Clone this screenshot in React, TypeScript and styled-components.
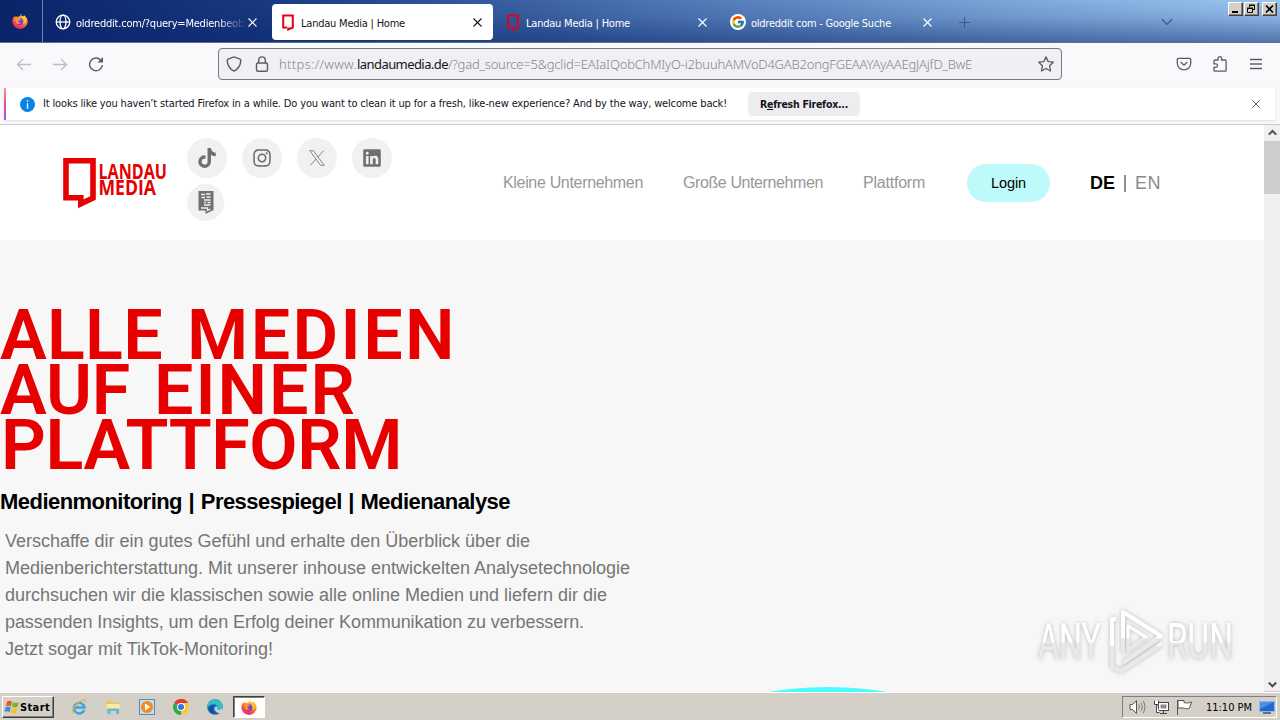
import React, { ReactNode, useLayoutEffect, useRef, useState } from 'react'
import { FaInstagram, FaLinkedin, FaTiktok } from 'react-icons/fa'
import { FcGoogle } from 'react-icons/fc'
import styled, { createGlobalStyle } from 'styled-components'

const uiFont = "'DejaVu Sans Condensed', 'DejaVu Sans', sans-serif"
const pageFont = "'Liberation Sans', Arial, sans-serif"

const GlobalStyle = createGlobalStyle`
  * {
    box-sizing: border-box;
  }
  body {
    margin: 0;
    overflow: hidden;
  }
  svg {
    display: block;
    flex: none;
  }
`

/* ---------- text ---------- */

const TextBox = styled.span`
  display: block;
  flex: none;
  white-space: pre;
`

type FitTextProps = {
  width: number
  children: ReactNode
}

// spreads the tracking so that a line takes exactly the given width
function FitText({ width, children }: FitTextProps) {
  const ref = useRef<HTMLSpanElement>(null)
  const [spacing, setSpacing] = useState(0)

  useLayoutEffect(() => {
    const el = ref.current
    if (!el) return
    const count = el.textContent?.length ?? 1
    setSpacing((width - el.getBoundingClientRect().width) / count)
  }, [width])

  return (
    <TextBox>
      <span ref={ref} style={{ letterSpacing: spacing }}>
        {children}
      </span>
    </TextBox>
  )
}

/* ---------- browser chrome ---------- */

const Screen = styled.div`
  display: flex;
  flex-direction: column;
  width: 1280px;
  height: 720px;
  overflow: hidden;
  background: #f9f9fb;
  font-family: ${uiFont};
`

const TabStrip = styled.div`
  display: flex;
  flex: none;
  height: 43px;
  border-bottom: 1px solid #5d6f95;
  color: #fff;
  font-size: 11px;
  background:
    linear-gradient(to bottom, rgba(10, 36, 106, 0) 0%, rgba(10, 36, 106, 0.12) 40%, rgba(10, 36, 106, 0.5) 100%),
    linear-gradient(to right, #0a246a 0%, #173880 20%, #4a73b2 50%, #7ba6d8 78%, #9bc6f0 100%);
`

const PinnedArea = styled.div`
  display: flex;
  align-items: center;
  justify-content: center;
  width: 43px;
  padding-right: 3px;
  margin-right: 4px;
  border-right: 1px solid #7283ad;
`

const TabItem = styled.div<{ $active?: boolean }>`
  display: flex;
  align-items: center;
  width: 221px;
  height: 36px;
  margin: 4px 4px 0 0;
  padding: 0 11px 0 8px;
  border-radius: 4px;
  color: ${({ $active }) => ($active ? '#15141a' : '#fff')};
  background: ${({ $active }) => ($active ? '#fff' : 'transparent')};
`

const TabIcon = styled.div`
  display: flex;
  justify-content: center;
  width: 16px;
  margin-right: 5px;
`

const TabLabel = styled.div<{ $fade?: boolean }>`
  flex: 1;
  padding-top: 3px;
  overflow: hidden;
  line-height: 16px;
  ${({ $fade }) => $fade && 'mask-image: linear-gradient(to right, #000 82%, transparent 99%);'}
`

const NewTab = styled.div`
  display: flex;
  align-items: center;
  flex: 1;
  padding: 3px 0 0 12px;
`

const TabsMenu = styled.div`
  display: flex;
  align-items: center;
  padding: 2px 55px 0 0;
`

const WindowButtons = styled.div`
  display: flex;
  gap: 1px;
  padding: 2px 3px 0 0;
`

const WindowButton = styled.div<{ $gap?: boolean }>`
  display: flex;
  align-items: center;
  justify-content: center;
  width: 15px;
  height: 14px;
  margin-left: ${({ $gap }) => ($gap ? '2px' : '0')};
  border: 1px solid;
  border-color: #fff #404040 #404040 #fff;
  box-shadow: inset -1px -1px 0 #808080;
  background: #d4d0c8;
`

const NavBar = styled.div`
  display: flex;
  align-items: center;
  flex: none;
  height: 45px;
  padding: 0 16px 3px;
  color: #5b5b66;
`

const HistoryButtons = styled.div`
  display: flex;
  gap: 20px;
  width: 202px;
`

const UrlBar = styled.div`
  display: flex;
  align-items: center;
  width: 844px;
  height: 32px;
  padding: 0 7px;
  border: 1px solid #77777f;
  border-radius: 4px;
  background: #f0f0f4;
`

const UrlText = styled.div`
  display: flex;
  flex: 1;
  margin-left: 9px;
  color: #85858f;
  font-family: 'Noto Sans', 'Open Sans', sans-serif;
  font-size: 13px;
  font-weight: 300;
  line-height: 18px;
`

const UrlDomain = styled.div`
  color: #15141a;
  font-weight: 400;
`

const UrlIcons = styled.div`
  display: flex;
  gap: 12px;
`

const ToolbarIcons = styled.div`
  display: flex;
  gap: 20px;
  margin-left: auto;
`

const InfoBar = styled.div`
  display: flex;
  align-items: center;
  flex: none;
  width: 1271px;
  height: 32px;
  margin: 0 0 4px 4px;
  padding-right: 15px;
  background: #fff;
  box-shadow: 0 1px 2px rgba(58, 57, 68, 0.15);
  color: #15141a;
  font-size: 11px;
`

const InfoAccent = styled.div`
  align-self: stretch;
  width: 2px;
  margin-right: 14px;
  background: linear-gradient(to bottom, #ff9a73, #e3508f 50%, #9059ff);
`

const InfoMessage = styled.div`
  margin-left: 8px;
  padding-bottom: 1px;
`

const RefreshButton = styled.div`
  display: flex;
  align-items: center;
  justify-content: center;
  width: 112px;
  height: 24px;
  margin: 0 auto 0 21px;
  border-radius: 4px;
  background: #ededf0;
  font-size: 10.5px;
  font-weight: 700;
`

/* ---------- web page ---------- */

const Viewport = styled.div`
  display: flex;
  flex: none;
  height: 568px;
  border-top: 1px solid #c8c8cc;
`

const Page = styled.div`
  width: 1264px;
  overflow: hidden;
  font-family: ${pageFont};
`

const PageHeader = styled.header`
  display: flex;
  align-items: center;
  height: 115px;
  padding-left: 63px;
  background: #fff;
`

const SocialList = styled.div`
  display: flex;
  flex-wrap: wrap;
  gap: 6px 15px;
  width: 206px;
  margin: 0 110px 6px 16px;
`

const SocialButton = styled.div<{ $size?: number }>`
  display: flex;
  align-items: center;
  justify-content: center;
  width: ${({ $size = 40 }) => $size}px;
  height: ${({ $size = 40 }) => $size}px;
  border-radius: 50%;
  background: #f1f1f1;
  color: #6f6f6f;
`

const MainNav = styled.nav`
  display: flex;
  align-items: center;
  gap: 40px;
  color: #979797;
  font-size: 16px;
`

const LoginButton = styled.div`
  display: flex;
  align-items: center;
  justify-content: center;
  width: 83px;
  height: 38px;
  margin-left: 2px;
  border-radius: 19px;
  background: #bffafa;
  color: #000;
  font-size: 14.5px;
`

const LanguageSwitch = styled.div`
  display: flex;
  align-items: center;
  gap: 9px;
  padding-top: 1px;
  color: #8a8a8a;
  font-size: 18px;
  b {
    color: #000;
  }
`

const LanguageDivider = styled.div`
  width: 2px;
  height: 17px;
  background: #8f8f8f;
`

const Hero = styled.main`
  position: relative;
  height: 452px;
  padding-top: 68px;
  overflow: hidden;
  background: #f7f7f7;
`

const Headline = styled.h1`
  margin: 0;
  color: #e60000;
  font-family: Roboto, sans-serif;
  font-size: 70px;
  font-weight: 580;
  line-height: 55px;
`

const HeadlineRow = styled.div<{ $indent?: number }>`
  display: flex;
  gap: 24px;
  padding-left: ${({ $indent = 0 }) => $indent}px;
`

const SubHeadline = styled.h2`
  margin: 16px 0 0;
  color: #000;
  font-size: 22px;
  font-weight: 700;
  line-height: 26px;
  word-spacing: 1px;
`

const Intro = styled.div`
  margin: 13px 0 0 5px;
  color: #757575;
  font-size: 18px;
  line-height: 27px;
`

const CyanDisc = styled.div`
  position: absolute;
  top: 447px;
  left: 468px;
  width: 720px;
  height: 720px;
  border-radius: 50%;
  background: #4ffafa;
`

const Watermark = styled.div`
  position: absolute;
  top: 363px;
  left: 1032px;
`

const ScrollBar = styled.div`
  display: flex;
  flex-direction: column;
  width: 16px;
  background: #f0f0f0;
`

const ScrollArrow = styled.div`
  display: flex;
  align-items: center;
  justify-content: center;
  height: 16px;
`

const ScrollThumb = styled.div`
  height: 53px;
  margin-bottom: auto;
  background: #cdcdcd;
`

/* ---------- taskbar ---------- */

const Taskbar = styled.div`
  display: flex;
  align-items: center;
  flex: 1;
  padding: 1px 3px 0 2px;
  border-top: 1px solid #fff;
  box-shadow: 0 -1px 0 #d4d0c8;
  background: #d4d0c8;
  color: #000;
`

const StartButton = styled.div`
  display: flex;
  align-items: center;
  width: 52px;
  height: 22px;
  padding-left: 1px;
  border: 1px solid;
  border-color: #fff #404040 #404040 #fff;
  box-shadow: inset -1px -1px 0 #808080;
  font-size: 11px;
  font-weight: 700;
`

const QuickLaunch = styled.div`
  display: flex;
  align-items: center;
  gap: 18px;
  margin-left: 17px;
`

const RunningApp = styled.div`
  display: flex;
  align-items: center;
  justify-content: center;
  width: 32px;
  height: 22px;
  margin-left: 10px;
  border: 1px solid;
  border-color: #404040 #fff #fff #404040;
  box-shadow: inset 1px 1px 0 #808080;
  background: #fff;
`

const Tray = styled.div`
  display: flex;
  align-items: center;
  gap: 7px;
  width: 155px;
  height: 22px;
  margin-left: auto;
  padding-left: 6px;
  border: 1px solid;
  border-color: #808080 #fff #fff #808080;
  font-size: 11px;
`

const Clock = styled.div`
  margin-left: 7px;
`

/* ---------- drawings ---------- */

type IconProps = {
  size?: number
  color?: string
}

const FirefoxIcon = ({ size = 16 }: IconProps) => (
  <svg width={size} height={size} viewBox="0 0 16 16">
    <defs>
      <linearGradient id="fx-flame" x1="0.8" y1="0" x2="0.3" y2="1">
        <stop offset="0" stopColor="#fff04a" />
        <stop offset="0.4" stopColor="#ff9a22" />
        <stop offset="0.75" stopColor="#ff4240" />
        <stop offset="1" stopColor="#e62380" />
      </linearGradient>
    </defs>
    <path
      d="M10 .3c-.9 1-.9 2.1-.4 3 .6-.3 1.500-.2 2 .2.400-.5.300-1 .200-1.500 2 1.300 3.900 3.800 3.900 6.500A7.600 7.500 0 0 1 8 15.900 7.600 7.500 0 0 1 .4 8.500C.4 6 1.400 4 2.500 2.900l.4 1.400L4.500 3l.5 1.500c1-1.300 2.400-1.100 3.300-1.200C8.100 2 8.900.8 10 .3z"
      fill="url(#fx-flame)"
    />
    <circle cx="8" cy="8.800" r="3.500" fill="#7542e5" />
    <path d="M3.500 5.500c1.300-.7 2.500-.5 3.500.1 1.300 0 1.900.6 1.700 1-.5.800-1.700.5-2.200 1.500-.3 1.300.9 2.200 2.200 1.900-1.200 1.700-3.900 1.300-4.700-.6-.5-1.300-.7-2.700-.5-3.900z" fill="#ff9422" />
    <path d="M10 5c1.900 1.600 2.300 4.200.8 6 2.200-.2 3.400-2.200 2.900-4.300C13.200 5 11.800 3.400 10 3z" fill="#ffc533" />
  </svg>
)

const GlobeIcon = () => (
  <svg width="16" height="16" viewBox="0 0 16 16" fill="none" stroke="#fff" strokeWidth="1.300">
    <circle cx="8" cy="8" r="6.800" />
    <ellipse cx="8" cy="8" rx="3" ry="6.800" />
    <path d="M1.200 8h13.600" />
  </svg>
)

const FrameIcon = () => (
  <svg width="12" height="17" viewBox="0 0 12 17" fill="none" stroke="#e2001a" strokeWidth="2">
    <path d="M5 13.500H1.200v-12h9.600v12L6.200 15.500v-2" />
  </svg>
)

const CloseIcon = ({ size = 9, color = 'currentColor' }: IconProps) => (
  <svg width={size} height={size} viewBox="0 0 9 9" stroke={color} strokeWidth="1.100">
    <path d="M.5.5l8 8M8.500.5l-8 8" />
  </svg>
)

const ArrowIcon = ({ back }: { back?: boolean }) => (
  <svg width="16" height="16" viewBox="0 0 16 16" fill="none" stroke="#bdbdc3" strokeWidth="1.300">
    <path d={back ? 'M15 8.500H1.500M7 3L1.500 8.500 7 14' : 'M1 8.500h13.500M9 3L14.500 8.500 9 14'} />
  </svg>
)

const ReloadIcon = () => (
  <svg width="16" height="16" viewBox="0 0 16 16" fill="none" stroke="#5b5b66" strokeWidth="1.400">
    <path d="M12.700 4A6.400 6.400 0 1 0 14.400 9" />
    <path d="M15 1v5.500H9.500z" fill="#5b5b66" stroke="none" />
  </svg>
)

const ShieldIcon = () => (
  <svg width="16" height="16" viewBox="0 0 16 16" fill="none" stroke="#5b5b66" strokeWidth="1.400">
    <path d="M8 .9l6 2.300c.7.3.8.700.8 1.200-.2 5-2.500 8.700-6.800 10.700C3.700 13.100 1.400 9.400 1.200 4.400c0-.5.100-.9.800-1.200z" />
  </svg>
)

const LockIcon = () => (
  <svg width="16" height="16" viewBox="0 0 16 16" fill="none" stroke="#5b5b66" strokeWidth="1.400">
    <rect x="2.500" y="7" width="11" height="8.300" rx="1.500" />
    <path d="M4.700 7V4.200a3.300 3.300 0 0 1 6.600 0V7" />
  </svg>
)

const StarIcon = () => (
  <svg width="16" height="16" viewBox="0 0 16 16" fill="none" stroke="#5b5b66" strokeWidth="1.300" strokeLinejoin="round">
    <path d="M8 .9l2.200 4.700 5.100.6-3.700 3.600.9 5.200L8 12.500 3.500 15l.9-5.200L.7 6.200l5.100-.6z" />
  </svg>
)

const PocketIcon = () => (
  <svg width="16" height="16" viewBox="0 0 16 16" fill="none" stroke="#5b5b66" strokeWidth="1.300">
    <path d="M2.500 2.300h11c.7 0 1.200.5 1.200 1.200v3.700a6.700 6.700 0 0 1-13.400 0V3.500c0-.7.5-1.200 1.200-1.200z" />
    <path d="M4.700 6L8 9.200 11.300 6" />
  </svg>
)

const PuzzleIcon = () => (
  <svg width="16" height="16" viewBox="0 0 16 16" fill="none" stroke="#5b5b66" strokeWidth="1.300">
    <path d="M6 4V2.500a1.800 1.800 0 0 1 3.600 0V4h3.600c.6 0 .9.300.9.900v9.400c0 .6-.3.900-.9.900H2.900c-.6 0-.9-.3-.9-.9v-3h1.800a1.700 1.700 0 0 0 0-3.500H2V4.900c0-.6.300-.9.900-.9z" />
  </svg>
)

const MenuIcon = () => (
  <svg width="16" height="16" viewBox="0 0 16 16" stroke="#5b5b66" strokeWidth="1.300">
    <path d="M2 3.500h12M2 8h12M2 12.500h12" />
  </svg>
)

const InfoIcon = () => (
  <svg width="15" height="15" viewBox="0 0 15 15">
    <circle cx="7.500" cy="7.500" r="7.500" fill="#0a84e4" />
    <path d="M7.500 3.200v1.500M7.500 6.200v5.500" stroke="#fff" strokeWidth="1.300" />
  </svg>
)

const ChevronIcon = ({ up, size = 8 }: { up?: boolean; size?: number }) => (
  <svg width={size} height={size} viewBox="0 0 8 8" fill="none" stroke="#505050" strokeWidth="1.800">
    <path d={up ? 'M.7 5L4 1.700 7.300 5' : 'M.7 2.300L4 5.600l3.300-3.300'} />
  </svg>
)

const LandauLogo = () => (
  <svg width="108" height="54" viewBox="0 0 108 54" overflow="visible">
    <path d="M3 4.700h27v37.200L17.800 47.800v-6H3z" fill="none" stroke="#e60000" strokeWidth="5.600" />
    <g fill="#e60000" fontFamily="'Open Sans', sans-serif" fontWeight="700" fontSize="21.500">
      <text x="35.500" y="22.500" textLength="68.500" lengthAdjust="spacingAndGlyphs">LANDAU</text>
      <text x="35.500" y="39" textLength="57.500" lengthAdjust="spacingAndGlyphs">MEDIA</text>
    </g>
  </svg>
)

const XIcon = () => (
  <svg width="16" height="16" viewBox="0 0 16 16" fill="none" stroke="#858585" strokeWidth="1">
    <path d="M.8.7h3.600l10.800 14.600h-3.600zM14.600.7L8.700 7.200M7.200 8.900L1.300 15.300" />
  </svg>
)

const ClipIcon = () => (
  <svg width="16" height="23" viewBox="0 0 16 23">
    <path d="M.5 0h15v19l-8 4v-3.500h-7z" fill="#707070" />
    <path d="M3 3.500h4M8 3h4.500M3.500 6.500H7M8.500 6h4M6 9h6.500M6 11.500h2M9.500 11.500h3M6 14h6.500M3 17h6.500v2.500l3-1.500" fill="none" stroke="#f1f1f1" strokeWidth="1.300" />
  </svg>
)

const AnyRunMark = () => (
  <svg width="208" height="76" viewBox="0 0 208 76" overflow="visible">
    <defs>
      <linearGradient id="mark-fill" x1="0" y1="0" x2="0" y2="1">
        <stop offset="0.5" stopColor="#fff" />
        <stop offset="0.52" stopColor="#e9e9e9" />
      </linearGradient>
      <filter id="mark-shadow" x="-10%" y="-10%" width="120%" height="130%">
        <feDropShadow dx="0" dy="0" stdDeviation="2" floodColor="#8a8a8a" floodOpacity="0.600" />
      </filter>
    </defs>
    <g filter="url(#mark-shadow)">
      <g fill="url(#mark-fill)" fontFamily="Roboto, sans-serif" fontWeight="400" fontSize="50">
        <text x="6" y="56" textLength="63" lengthAdjust="spacingAndGlyphs">ANY</text>
        <text x="135" y="56" textLength="66" lengthAdjust="spacingAndGlyphs">RUN</text>
      </g>
      <g fill="none" stroke="url(#mark-fill)" strokeWidth="4" strokeLinejoin="round">
        <path d="M91 50V9l38 24-38 27" />
        <path d="M84 16h-4v48l9 4 41-27" />
        <path d="M96 23l18 11-18 13z" strokeWidth="3" />
      </g>
    </g>
  </svg>
)

const WindowsFlag = () => (
  <svg width="16" height="16" viewBox="0 0 16 16">
    <path d="M3 2.500c2-1 3.500-.8 5 .2L7 7.300c-1.500-1-3-1.200-5-.2z" fill="#e8572a" />
    <path d="M9 3.200c2 1 3.500.9 5.800 0l-1.200 4.500c-2 .9-3.700.9-5.500 0z" fill="#79b52c" />
    <path d="M1.700 8.200c2-1 3.500-.8 5 .2l-1.200 4.800c-1.500-1-3-1.200-5-.2z" fill="#3d8bd8" />
    <path d="M7.700 9c2 1 3.500.9 5.700 0l-1.300 4.800c-2 .9-3.700.9-5.500 0z" fill="#f7c127" />
  </svg>
)

const IeIcon = () => (
  <svg width="16" height="16" viewBox="0 0 16 16" fill="none">
    <path d="M13.200 11A5.300 5.300 0 1 1 13.500 8.500H4" stroke="#3ba4e4" strokeWidth="2.400" />
    <path d="M2 14.500C-.5 13 4 5 9.500 2c3.500-2 6-1.500 5 1.500" stroke="#edb92e" strokeWidth="1.200" />
  </svg>
)

const FolderIcon = () => (
  <svg width="16" height="16" viewBox="0 0 16 16">
    <path d="M1 2h5l1 1.500h7V12H1z" fill="#e9c65c" />
    <path d="M1.500 5h13v5h-13z" fill="#fbe9a0" />
    <path d="M2.500 15V9.500h11.500V15h-3v-3h-5.500v3z" fill="#67b7dc" />
  </svg>
)

const PlayerIcon = () => (
  <svg width="16" height="16" viewBox="0 0 16 16">
    <rect x=".5" y=".5" width="15" height="15" fill="#c4ddf0" stroke="#4d8fc4" />
    <circle cx="8" cy="8" r="6" fill="#f58b14" />
    <path d="M6 4.500v7L11.500 8z" fill="#fff" />
  </svg>
)

const ChromeIcon = () => (
  <svg width="16" height="16" viewBox="0 0 16 16">
    <path d="M8 8L1.070 4A8 8 0 0 1 14.930 4z" fill="#e33b2e" />
    <path d="M8 8L14.930 4A8 8 0 0 1 8 16z" fill="#fcc934" />
    <path d="M8 8v8A8 8 0 0 1 1.070 4z" fill="#2da94f" />
    <path d="M8 4h6.930L11.460 10z" fill="#fcc934" />
    <path d="M8 4h6.930A8 8 0 0 0 8 0z" fill="#e33b2e" />
    <circle cx="8" cy="8" r="4" fill="#fff" />
    <circle cx="8" cy="8" r="3" fill="#2d74e7" />
  </svg>
)

const EdgeIcon = () => (
  <svg width="16" height="16" viewBox="0 0 16 16">
    <circle cx="8" cy="8" r="7.800" fill="#1269bd" />
    <path d="M.3 7C1.500-1.500 14.500-2 15.700 7c.3 3-3 4.300-5.700 3.200 1-1.200.8-4.700-3-4.900C4 5 1.500 6 .3 9z" fill="#34c1c4" />
    <path d="M10 10.300c1.500.7 4 .5 5.500-1v3c-.8.900-1.500 1.400-2.500 1.900-3.500 0-5.800-2.400-5.400-5.400.5-1.200 1.500-1.500 2.300-1.300.7.700.6 2.200.1 2.800z" fill="#d4d0c8" />
    <path d="M2.500 10.500c.3-3 2.500-4.600 5-4.200-2.500 1.500-2.500 5.500.5 8-3 .7-5-1-5.500-3.800z" fill="#1b489b" />
  </svg>
)

const SpeakerIcon = () => (
  <svg width="17" height="16" viewBox="0 0 17 16" fill="none" stroke="#555" strokeWidth="1">
    <path d="M1 5.500h2.500L7.500 1.500v13l-4-4H1z" fill="#fff" />
    <path d="M9.500 5.500c1 1.500 1 3.500 0 5M11.700 3.700c2 2.600 2 6 0 8.600M14 2c2.600 3.600 2.600 8.400 0 12" stroke="#777" />
  </svg>
)

const NetworkIcon = () => (
  <svg width="16" height="16" viewBox="0 0 16 16" stroke="#444" fill="#fff">
    <rect x="5.500" y="3.500" width="10" height="8" />
    <path d="M7.500 5.500h6v4h-6z" fill="#888" stroke="none" />
    <path d="M7 14.500h7M10.500 12v2M1.500 1.500v4h4v-4M3.500 5.500v8h3" />
  </svg>
)

const FlagIcon = () => (
  <svg width="16" height="16" viewBox="0 0 16 16" stroke="#555" fill="#fff">
    <path d="M1.500 1v15M2 1.500h6v2c2.500 1 4.500.5 7.500-.5l-2 6c-2 1-3.800 1-5.500 0H2z" />
  </svg>
)

const MonitorIcon = () => (
  <svg width="16" height="14" viewBox="0 0 16 14">
    <path d="M.5 1.500h15v10H.5z" fill="#2468cf" stroke="#8db7e8" />
    <path d="M1 2h14L1 9z" fill="#4a8ee6" />
    <path d="M4 13h8" stroke="#3c506e" strokeWidth="1.500" />
  </svg>
)

const introLines = [
  { text: 'Verschaffe dir ein gutes Gefühl und erhalte den Überblick über die', width: 525 },
  { text: 'Medienberichterstattung. Mit unserer inhouse entwickelten Analysetechnologie', width: 625 },
  { text: 'durchsuchen wir die klassischen sowie alle online Medien und liefern dir die', width: 602 },
  { text: 'passenden Insights, um den Erfolg deiner Kommunikation zu verbessern.', width: 579 },
  { text: 'Jetzt sogar mit TikTok-Monitoring!', width: 268 },
]

export default function App() {
  return (
    <Screen>
      <GlobalStyle />
      <TabStrip>
        <PinnedArea>
          <FirefoxIcon />
        </PinnedArea>
        <TabItem>
          <TabIcon>
            <GlobeIcon />
          </TabIcon>
          <TabLabel $fade>
            <FitText width={168}>oldreddit.com/?query=Medienbeob</FitText>
          </TabLabel>
          <CloseIcon />
        </TabItem>
        <TabItem $active>
          <TabIcon>
            <FrameIcon />
          </TabIcon>
          <TabLabel>
            <FitText width={104}>Landau Media | Home</FitText>
          </TabLabel>
          <CloseIcon />
        </TabItem>
        <TabItem>
          <TabIcon>
            <FrameIcon />
          </TabIcon>
          <TabLabel>
            <FitText width={104}>Landau Media | Home</FitText>
          </TabLabel>
          <CloseIcon />
        </TabItem>
        <TabItem>
          <TabIcon>
            <svg width="16" height="16" viewBox="0 0 16 16">
              <circle cx="8" cy="8" r="8" fill="#fff" />
              <FcGoogle x="1" y="1" size={14} />
            </svg>
          </TabIcon>
          <TabLabel>
            <FitText width={140}>oldreddit com - Google Suche</FitText>
          </TabLabel>
          <CloseIcon />
        </TabItem>
        <NewTab>
          <svg width="11" height="11" viewBox="0 0 11 11" stroke="#47597b">
            <path d="M5.500 0v11M0 5.500h11" />
          </svg>
        </NewTab>
        <TabsMenu>
          <svg width="12" height="8" viewBox="0 0 12 8" fill="none" stroke="#465f8a" strokeWidth="1.400">
            <path d="M.7 1L6 6.300 11.300 1" />
          </svg>
        </TabsMenu>
        <WindowButtons>
          <WindowButton>
            <svg width="11" height="10" viewBox="0 0 11 10">
              <path d="M2 7h6v2H2z" />
            </svg>
          </WindowButton>
          <WindowButton>
            <svg width="11" height="10" viewBox="0 0 11 10" fill="none" stroke="#000">
              <path d="M3.500 3V1.500h5v4H7M3 1h6M1.500 4.500h5v4h-5zM1 4h6" />
            </svg>
          </WindowButton>
          <WindowButton $gap>
            <svg width="11" height="10" viewBox="0 0 11 10" stroke="#000" strokeWidth="1.700">
              <path d="M2 1.500l7 7M9 1.500l-7 7" />
            </svg>
          </WindowButton>
        </WindowButtons>
      </TabStrip>

      <NavBar>
        <HistoryButtons>
          <ArrowIcon back />
          <ArrowIcon />
          <ReloadIcon />
        </HistoryButtons>
        <UrlBar>
          <UrlIcons>
            <ShieldIcon />
            <LockIcon />
          </UrlIcons>
          <UrlText>
            <FitText width={78}>https://www.</FitText>
            <UrlDomain>
              <FitText width={91}>landaumedia.de</FitText>
            </UrlDomain>
            <FitText width={524}>
              /?gad_source=5&amp;gclid=EAIaIQobChMIyO-i2buuhAMVoD4GAB2ongFGEAAYAyAAEgJAjfD_BwE
            </FitText>
          </UrlText>
          <StarIcon />
        </UrlBar>
        <ToolbarIcons>
          <PocketIcon />
          <PuzzleIcon />
          <MenuIcon />
        </ToolbarIcons>
      </NavBar>

      <InfoBar>
        <InfoAccent />
        <InfoIcon />
        <InfoMessage>
          <FitText width={684}>
            It looks like you haven’t started Firefox in a while. Do you want to clean it up for a fresh, like-new
            experience? And by the way, welcome back!
          </FitText>
        </InfoMessage>
        <RefreshButton>
          <FitText width={88}>
            R<u>e</u>fresh Firefox...
          </FitText>
        </RefreshButton>
        <CloseIcon size={8} color="#5b5b66" />
      </InfoBar>

      <Viewport>
        <Page>
          <PageHeader>
            <LandauLogo />
            <SocialList>
              <SocialButton>
                <FaTiktok size={20} />
              </SocialButton>
              <SocialButton>
                <FaInstagram size={20} />
              </SocialButton>
              <SocialButton>
                <XIcon />
              </SocialButton>
              <SocialButton>
                <FaLinkedin size={20} />
              </SocialButton>
              <SocialButton $size={37}>
                <ClipIcon />
              </SocialButton>
            </SocialList>
            <MainNav>
              <FitText width={140}>Kleine Unternehmen</FitText>
              <FitText width={140}>Große Unternehmen</FitText>
              <FitText width={62}>Plattform</FitText>
              <LoginButton>
                <FitText width={35}>Login</FitText>
              </LoginButton>
              <LanguageSwitch>
                <b>
                  <FitText width={25}>DE</FitText>
                </b>
                <LanguageDivider />
                <FitText width={26}>EN</FitText>
              </LanguageSwitch>
            </MainNav>
          </PageHeader>
          <Hero>
            <Headline>
              <HeadlineRow>
                <FitText width={163}>ALLE</FitText>
                <FitText width={270}>MEDIEN</FitText>
              </HeadlineRow>
              <HeadlineRow>
                <FitText width={130}>AUF</FitText>
                <FitText width={203}>EINER</FitText>
              </HeadlineRow>
              <HeadlineRow $indent={1}>
                <FitText width={401}>PLATTFORM</FitText>
              </HeadlineRow>
            </Headline>
            <SubHeadline>
              <FitText width={510}>Medienmonitoring | Pressespiegel | Medienanalyse</FitText>
            </SubHeadline>
            <Intro>
              {introLines.map(({ text, width }) => (
                <FitText key={text} width={width}>
                  {text}
                </FitText>
              ))}
            </Intro>
            <CyanDisc />
            <Watermark>
              <AnyRunMark />
            </Watermark>
          </Hero>
        </Page>
        <ScrollBar>
          <ScrollArrow>
            <ChevronIcon up size={9} />
          </ScrollArrow>
          <ScrollThumb />
          <ScrollArrow>
            <ChevronIcon size={9} />
          </ScrollArrow>
        </ScrollBar>
      </Viewport>

      <Taskbar>
        <StartButton>
          <WindowsFlag />
          <FitText width={30}>Start</FitText>
        </StartButton>
        <QuickLaunch>
          <IeIcon />
          <FolderIcon />
          <PlayerIcon />
          <ChromeIcon />
          <EdgeIcon />
        </QuickLaunch>
        <RunningApp>
          <FirefoxIcon />
        </RunningApp>
        <Tray>
          <SpeakerIcon />
          <NetworkIcon />
          <FlagIcon />
          <Clock>
            <FitText width={46}>11:10 PM</FitText>
          </Clock>
          <MonitorIcon />
        </Tray>
      </Taskbar>
    </Screen>
  )
}
